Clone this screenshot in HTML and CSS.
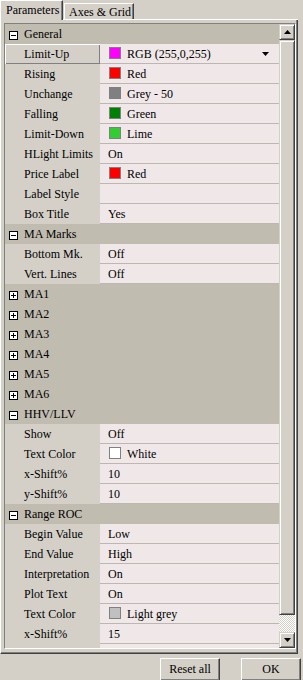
FILE: index.html
```html
<!DOCTYPE html>
<html lang="en">
<head>
    <meta charset="UTF-8">
    <title>Parameters</title>
    <link rel="stylesheet" href="styles.css">
</head>
<body>
    <div class="tabs">
        <div class="tab active">Parameters</div>
        <div class="tab">Axes &amp; Grid</div>
    </div>

    <div class="page">
        <div class="grid">
            <div class="rows">
                <div class="sec"><svg width="9" height="9" viewBox="0 0 9 9"><rect x="0.5" y="0.5" width="8" height="8" fill="#fff" stroke="#000"/><path d="M2 4.5h5" stroke="#000"/></svg><span>General</span></div>
                <div class="item">
                    <div class="label sel">Limit-Up</div>
                    <div class="value"><i class="swatch" style="background:#ff00ff"></i>RGB (255,0,255)<svg class="drop" width="7" height="4" viewBox="0 0 7 4"><path d="M0 0h7L3.5 4z" fill="#000"/></svg></div>
                </div>
                <div class="item"><div class="label">Rising</div><div class="value"><i class="swatch" style="background:#ff0000"></i>Red</div></div>
                <div class="item"><div class="label">Unchange</div><div class="value"><i class="swatch" style="background:#808080"></i>Grey - 50</div></div>
                <div class="item"><div class="label">Falling</div><div class="value"><i class="swatch" style="background:#008000"></i>Green</div></div>
                <div class="item"><div class="label">Limit-Down</div><div class="value"><i class="swatch" style="background:#32cd32"></i>Lime</div></div>
                <div class="item"><div class="label">HLight Limits</div><div class="value">On</div></div>
                <div class="item"><div class="label">Price Label</div><div class="value"><i class="swatch" style="background:#ff0000"></i>Red</div></div>
                <div class="item"><div class="label">Label Style</div><div class="value"></div></div>
                <div class="item"><div class="label">Box Title</div><div class="value">Yes</div></div>

                <div class="sec"><svg width="9" height="9" viewBox="0 0 9 9"><rect x="0.5" y="0.5" width="8" height="8" fill="#fff" stroke="#000"/><path d="M2 4.5h5" stroke="#000"/></svg><span>MA Marks</span></div>
                <div class="item"><div class="label">Bottom Mk.</div><div class="value">Off</div></div>
                <div class="item"><div class="label">Vert. Lines</div><div class="value">Off</div></div>

                <div class="sec"><svg width="9" height="9" viewBox="0 0 9 9"><rect x="0.5" y="0.5" width="8" height="8" fill="#fff" stroke="#000"/><path d="M2 4.5h5M4.5 2v5" stroke="#000"/></svg><span>MA1</span></div>
                <div class="sec"><svg width="9" height="9" viewBox="0 0 9 9"><rect x="0.5" y="0.5" width="8" height="8" fill="#fff" stroke="#000"/><path d="M2 4.5h5M4.5 2v5" stroke="#000"/></svg><span>MA2</span></div>
                <div class="sec"><svg width="9" height="9" viewBox="0 0 9 9"><rect x="0.5" y="0.5" width="8" height="8" fill="#fff" stroke="#000"/><path d="M2 4.5h5M4.5 2v5" stroke="#000"/></svg><span>MA3</span></div>
                <div class="sec"><svg width="9" height="9" viewBox="0 0 9 9"><rect x="0.5" y="0.5" width="8" height="8" fill="#fff" stroke="#000"/><path d="M2 4.5h5M4.5 2v5" stroke="#000"/></svg><span>MA4</span></div>
                <div class="sec"><svg width="9" height="9" viewBox="0 0 9 9"><rect x="0.5" y="0.5" width="8" height="8" fill="#fff" stroke="#000"/><path d="M2 4.5h5M4.5 2v5" stroke="#000"/></svg><span>MA5</span></div>
                <div class="sec"><svg width="9" height="9" viewBox="0 0 9 9"><rect x="0.5" y="0.5" width="8" height="8" fill="#fff" stroke="#000"/><path d="M2 4.5h5M4.5 2v5" stroke="#000"/></svg><span>MA6</span></div>

                <div class="sec"><svg width="9" height="9" viewBox="0 0 9 9"><rect x="0.5" y="0.5" width="8" height="8" fill="#fff" stroke="#000"/><path d="M2 4.5h5" stroke="#000"/></svg><span>HHV/LLV</span></div>
                <div class="item"><div class="label">Show</div><div class="value">Off</div></div>
                <div class="item"><div class="label">Text Color</div><div class="value"><i class="swatch" style="background:#ffffff"></i>White</div></div>
                <div class="item"><div class="label">x-Shift%</div><div class="value">10</div></div>
                <div class="item"><div class="label">y-Shift%</div><div class="value">10</div></div>

                <div class="sec"><svg width="9" height="9" viewBox="0 0 9 9"><rect x="0.5" y="0.5" width="8" height="8" fill="#fff" stroke="#000"/><path d="M2 4.5h5" stroke="#000"/></svg><span>Range ROC</span></div>
                <div class="item"><div class="label">Begin Value</div><div class="value">Low</div></div>
                <div class="item"><div class="label">End Value</div><div class="value">High</div></div>
                <div class="item"><div class="label">Interpretation</div><div class="value">On</div></div>
                <div class="item"><div class="label">Plot Text</div><div class="value">On</div></div>
                <div class="item"><div class="label">Text Color</div><div class="value"><i class="swatch" style="background:#c0c0c0"></i>Light grey</div></div>
                <div class="item"><div class="label">x-Shift%</div><div class="value">15</div></div>
                <div class="item"><div class="label"></div><div class="value"></div></div>
            </div>

            <div class="sbar">
                <div class="sbtn"><svg width="7" height="4" viewBox="0 0 7 4"><path d="M0 4h7L3.5 0z" fill="#000"/></svg></div>
                <div class="sbtn thumb"></div>
                <div class="track"></div>
                <div class="sbtn"><svg width="7" height="4" viewBox="0 0 7 4"><path d="M0 0h7L3.5 4z" fill="#000"/></svg></div>
            </div>
        </div>
    </div>

    <div class="foot">
        <button>Reset all</button>
        <button>OK</button>
    </div>
</body>
</html>
```

FILE: styles.css
```css
body {
    margin: 0;
    width: 303px;
    height: 680px;
    overflow: hidden;
    background: #d4d0c8;
    font-family: "Liberation Serif", serif;
    font-size: 12px;
    color: #000;
}

/* tab strip */
.tabs {
    display: flex;
    align-items: flex-start;
    width: 298px;
    height: 19px;
    border-bottom: 1px solid #fff;
}
.tab {
    box-sizing: border-box;
    width: 70px;
    height: 16px;
    margin: 3px 0 0 1px;
    padding-left: 4px;
    line-height: 16px;
    border-left: 1px solid #fff;
    border-top: 1px solid #fff;
    border-right: 1px solid #404040;
    box-shadow: inset -1px 0 #808080;
    white-space: nowrap;
}
.tab.active {
    width: 63px;
    height: 20px;
    margin: 0;
    padding-left: 5px;
    line-height: 19px;
    background: #d4d0c8;
}

/* tab page */
.page {
    box-sizing: border-box;
    width: 298px;
    padding: 3px 1px 4px 3px;
    border-left: 1px solid #fff;
    border-right: 1px solid #404040;
    border-bottom: 1px solid #404040;
    box-shadow: inset -1px -1px #808080;
}
.grid {
    display: flex;
    box-sizing: border-box;
    width: 292px;
    height: 626px;
    border: 1px solid;
    border-color: #808080 #fff #fff #808080;
}
.rows {
    width: 274px;
    height: 624px;
    overflow: hidden;
}

.sec {
    display: flex;
    align-items: flex-start;
    height: 20px;
    background: #c0bcb0;
}
.sec svg {
    display: block;
    margin: 7px 6px 0 4px;
}
.sec span {
    line-height: 20px;
}

.item {
    display: flex;
    height: 20px;
}
.label {
    box-sizing: border-box;
    width: 95px;
    height: 20px;
    padding-left: 19px;
    line-height: 20px;
    white-space: nowrap;
}
.label.sel {
    box-shadow: inset 1px 1px #fff, inset -1px -1px #808080;
}
.value {
    flex: 1;
    display: flex;
    align-items: flex-start;
    box-sizing: border-box;
    height: 20px;
    padding-left: 8px;
    line-height: 20px;
    background: #f0e8e8;
    border-bottom: 1px solid #bcb8b0;
    white-space: nowrap;
}
.swatch {
    box-sizing: border-box;
    width: 12px;
    height: 12px;
    margin: 3px 6px 0 1px;
    border: 1px solid #808080;
}
.drop {
    margin: 8px 10px 0 auto;
}

/* scrollbar */
.sbar {
    display: flex;
    flex-direction: column;
    width: 16px;
}
.sbtn {
    display: flex;
    align-items: center;
    justify-content: center;
    box-sizing: border-box;
    height: 16px;
    background: #d4d0c8;
    border: 1px solid;
    border-color: #d4d0c8 #404040 #404040 #d4d0c8;
    box-shadow: inset 1px 1px #fff, inset -1px -1px #808080;
}
.thumb {
    height: 575px;
}
.track {
    flex: 1;
    background: conic-gradient(#fff 25%, #d4d0c8 0 50%, #fff 0 75%, #d4d0c8 0) 0 0 / 2px 2px;
}

/* buttons */
.foot {
    display: flex;
    justify-content: flex-end;
    gap: 21px;
    padding: 4px 2px 0 0;
}
.foot button {
    width: 60px;
    height: 23px;
    padding: 0;
    font: inherit;
    color: #000;
    background: #d4d0c8;
    border: 1px solid;
    border-color: #fff #404040 #404040 #fff;
    box-shadow: inset -1px -1px #808080;
}
```
